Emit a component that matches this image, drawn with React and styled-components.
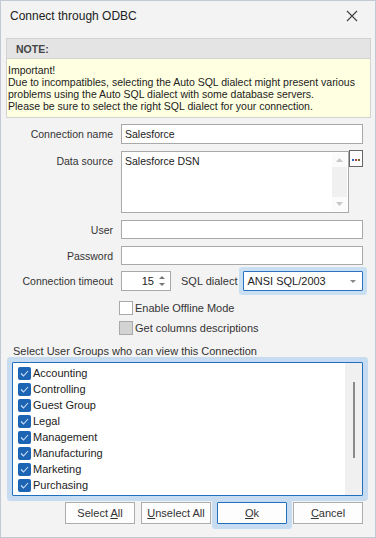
import React from 'react'
import styled, { createGlobalStyle } from 'styled-components'

const GlobalStyle = createGlobalStyle`
  html, body {
    margin: 0;
    padding: 0;
    background: #f3f3f3;
  }
  body {
    font-family: "Liberation Sans", Arial, sans-serif;
    font-size: 10.5px;
    color: #333;
  }
  * { box-sizing: border-box; }
`

const groups = [
  'Accounting',
  'Controlling',
  'Guest Group',
  'Legal',
  'Management',
  'Manufacturing',
  'Marketing',
  'Purchasing',
]

const App = () => {
  return (
    <>
      <GlobalStyle />
      <Window>
        <TitleBar>
          <Title>Connect through ODBC</Title>
          <Close width="12" height="12" viewBox="0 0 12 12">
            <path d="M1 1 L11 11 M11 1 L1 11" stroke="#444" strokeWidth="1.2" />
          </Close>
        </TitleBar>

        <Note>
          <NoteHeader>NOTE:</NoteHeader>
          <NoteBody>
            <div>Important!</div>
            <div>Due to incompatibles, selecting the Auto SQL dialect might present various</div>
            <div>problems using the Auto SQL dialect with some database servers.</div>
            <div>Please be sure to select the right SQL dialect for your connection.</div>
          </NoteBody>
        </Note>

        <Form>
          <Row $top={6}>
            <Label>Connection name</Label>
            <TextInput $h={20}>Salesforce</TextInput>
          </Row>

          <Row $top={7} $align="flex-start">
            <Label $pt={4}>Data source</Label>
            <Memo>
              <MemoText>Salesforce DSN</MemoText>
              <MemoScroll>
                <ScrollArrow>
                  <svg width="7" height="4" viewBox="0 0 7 4"><path d="M0 4 L3.5 0 L7 4Z" fill="#c8c8c8" /></svg>
                </ScrollArrow>
                <ScrollArrow>
                  <svg width="7" height="4" viewBox="0 0 7 4"><path d="M0 0 L3.5 4 L7 0Z" fill="#c8c8c8" /></svg>
                </ScrollArrow>
              </MemoScroll>
            </Memo>
            <Ellipsis>
              <Dot $c="#3060c0" />
              <Dot $c="#b04040" />
              <Dot $c="#806030" />
            </Ellipsis>
          </Row>

          <Row $top={7}>
            <Label>User</Label>
            <TextInput $h={19} />
          </Row>

          <Row $top={7}>
            <Label>Password</Label>
            <TextInput $h={19} />
          </Row>

          <Row $top={6}>
            <Label>Connection timeout</Label>
            <Spin>
              <SpinValue>15</SpinValue>
              <SpinArrows>
                <svg width="6" height="3" viewBox="0 0 6 3"><path d="M0 3 L3 0 L6 3Z" fill="#777" /></svg>
                <svg width="6" height="3" viewBox="0 0 6 3"><path d="M0 0 L3 3 L6 0Z" fill="#777" /></svg>
              </SpinArrows>
            </Spin>
            <InlineLabel>SQL dialect</InlineLabel>
            <Combo>
              <span>ANSI SQL/2003</span>
              <svg width="6" height="3" viewBox="0 0 6 3"><path d="M0 0 L3 3 L6 0Z" fill="#888" /></svg>
            </Combo>
          </Row>

          <CheckRow $top={10}>
            <Box />
            <span>Enable Offline Mode</span>
          </CheckRow>
          <CheckRow $top={6}>
            <Box $disabled />
            <span>Get columns descriptions</span>
          </CheckRow>
        </Form>

        <GroupsCaption>Select User Groups who can view this Connection</GroupsCaption>
        <List>
          <Items>
            {groups.map((g) => (
              <Item key={g}>
                <Tick>
                  <svg width="9" height="7" viewBox="0 0 9 7">
                    <path d="M1 3.5 L3.5 6 L8 1" stroke="#cfe2f7" strokeWidth="1.1" fill="none" />
                  </svg>
                </Tick>
                <span>{g}</span>
              </Item>
            ))}
          </Items>
          <ListScroll>
            <Thumb />
          </ListScroll>
        </List>

        <Buttons>
          <Button><span>Select <u>A</u>ll</span></Button>
          <Button><span><u>U</u>nselect All</span></Button>
          <Button $primary><span><u>O</u>k</span></Button>
          <Button><span><u>C</u>ancel</span></Button>
        </Buttons>
      </Window>
    </>
  )
}

const Window = styled.div`
  width: 376px;
  height: 538px;
  border: 1px solid #c3c9d3;
  background: #f3f3f3;
  display: flex;
  flex-direction: column;
`

const TitleBar = styled.div`
  height: 30px;
  display: flex;
  align-items: center;
  justify-content: space-between;
  padding: 0 17px 0 9px;
`

const Title = styled.div`
  font-size: 12px;
  color: #222;
`

const Close = styled.svg`
  display: block;
`

const Note = styled.div`
  margin: 7px 4px 0 5px;
  border: 1px solid #d2d2d2;
`

const NoteHeader = styled.div`
  height: 20px;
  line-height: 20px;
  padding-left: 9px;
  background: #e4e4e4;
  border-bottom: 1px solid #d2d2d2;
  font-weight: bold;
  color: #444;
`

const NoteBody = styled.div`
  background: #ffffe1;
  padding: 5px 1px 5px 1px;
  line-height: 12px;
  white-space: nowrap;
  color: #222;
`

const Form = styled.div`
  display: flex;
  flex-direction: column;
  padding-right: 12px;
`

const Row = styled.div`
  display: flex;
  align-items: ${(p) => p.$align || 'center'};
  margin-top: ${(p) => p.$top}px;
`

const Label = styled.div`
  width: 112px;
  flex-shrink: 0;
  text-align: right;
  margin-right: 8px;
  padding-top: ${(p) => p.$pt || 0}px;
  color: #333;
`

const TextInput = styled.div`
  flex: 1;
  height: ${(p) => p.$h}px;
  background: #fff;
  border: 1px solid #a9a9a9;
  padding: 0 3px;
  display: flex;
  align-items: center;
  color: #222;
`

const Memo = styled.div`
  width: 228px;
  height: 62px;
  background: #fff;
  border: 1px solid #a9a9a9;
  display: flex;
`

const MemoText = styled.div`
  flex: 1;
  padding: 3px 3px;
  color: #222;
`

const MemoScroll = styled.div`
  width: 15px;
  margin: 1px 1px 1px 0;
  background: #f0f0f0;
  display: flex;
  flex-direction: column;
  justify-content: space-between;
`

const ScrollArrow = styled.div`
  height: 14px;
  background: #fbfbfb;
  display: flex;
  align-items: center;
  justify-content: center;
`

const Ellipsis = styled.div`
  width: 14px;
  height: 17px;
  margin-top: -1px;
  border: 1px solid #666;
  background: #fdfdfd;
  display: flex;
  align-items: flex-end;
  justify-content: center;
  gap: 1px;
  padding-bottom: 5px;
`

const Dot = styled.div`
  width: 2px;
  height: 2px;
  background: ${(p) => p.$c};
`

const Spin = styled.div`
  width: 50px;
  height: 20px;
  background: #fff;
  border: 1px solid #a9a9a9;
  display: flex;
  align-items: center;
  justify-content: flex-end;
  padding-right: 5px;
  gap: 5px;
`

const SpinValue = styled.span`
  color: #222;
  font-size: 11px;
`

const SpinArrows = styled.div`
  display: flex;
  flex-direction: column;
  gap: 4px;
  svg { display: block; }
`

const InlineLabel = styled.div`
  margin: 0 6px 0 10px;
  color: #333;
  font-size: 11px;
`

const Combo = styled.div`
  flex: 1;
  height: 20px;
  background: #fff;
  border: 1px solid #2b73c2;
  border-radius: 1px;
  box-shadow: 0 0 0 4px #c9dff2;
  display: flex;
  align-items: center;
  justify-content: space-between;
  padding: 0 6px 0 3px;
  color: #222;
  font-size: 11px;
`

const CheckRow = styled.div`
  display: flex;
  align-items: center;
  gap: 2px;
  margin-left: 118px;
  margin-top: ${(p) => p.$top}px;
  color: #333;
  font-size: 11px;
`

const Box = styled.div`
  width: 14px;
  height: 14px;
  border: 1px solid #a9a9a9;
  background: ${(p) => (p.$disabled ? '#d3d3d3' : '#fff')};
`

const GroupsCaption = styled.div`
  margin: 10px 0 0 12px;
  color: #333;
  font-size: 11px;
`

const List = styled.div`
  margin: 5px 12px 0 11px;
  height: 134px;
  background: #fff;
  border: 1px solid #2170c0;
  border-radius: 1px;
  box-shadow: 0 0 0 5px #c7dcf1;
  display: flex;
`

const Items = styled.div`
  flex: 1;
  padding: 2px 0 0 5px;
`

const Item = styled.div`
  height: 16px;
  display: flex;
  align-items: center;
  gap: 2px;
  font-size: 11px;
  color: #222;
`

const Tick = styled.div`
  width: 13px;
  height: 13px;
  border-radius: 2px;
  background: #1d64b5;
  display: flex;
  align-items: center;
  justify-content: center;
`

const ListScroll = styled.div`
  width: 17px;
  background: #f0f0f0;
  display: flex;
  justify-content: center;
  padding-top: 19px;
`

const Thumb = styled.div`
  width: 2px;
  height: 76px;
  background: #8a8a8a;
`

const Buttons = styled.div`
  display: flex;
  justify-content: flex-end;
  gap: 6px;
  margin: 6px 12px 0 0;
`

const Button = styled.div`
  width: 70px;
  height: 22px;
  background: #fdfdfd;
  border: 1px solid ${(p) => (p.$primary ? '#2170c0' : '#adadad')};
  box-shadow: ${(p) => (p.$primary ? '0 0 0 5px #c7dcf1' : 'none')};
  border-radius: ${(p) => (p.$primary ? '1px' : '0')};
  display: flex;
  align-items: center;
  justify-content: center;
  color: #333;
  font-size: 11px;
`

export default App
